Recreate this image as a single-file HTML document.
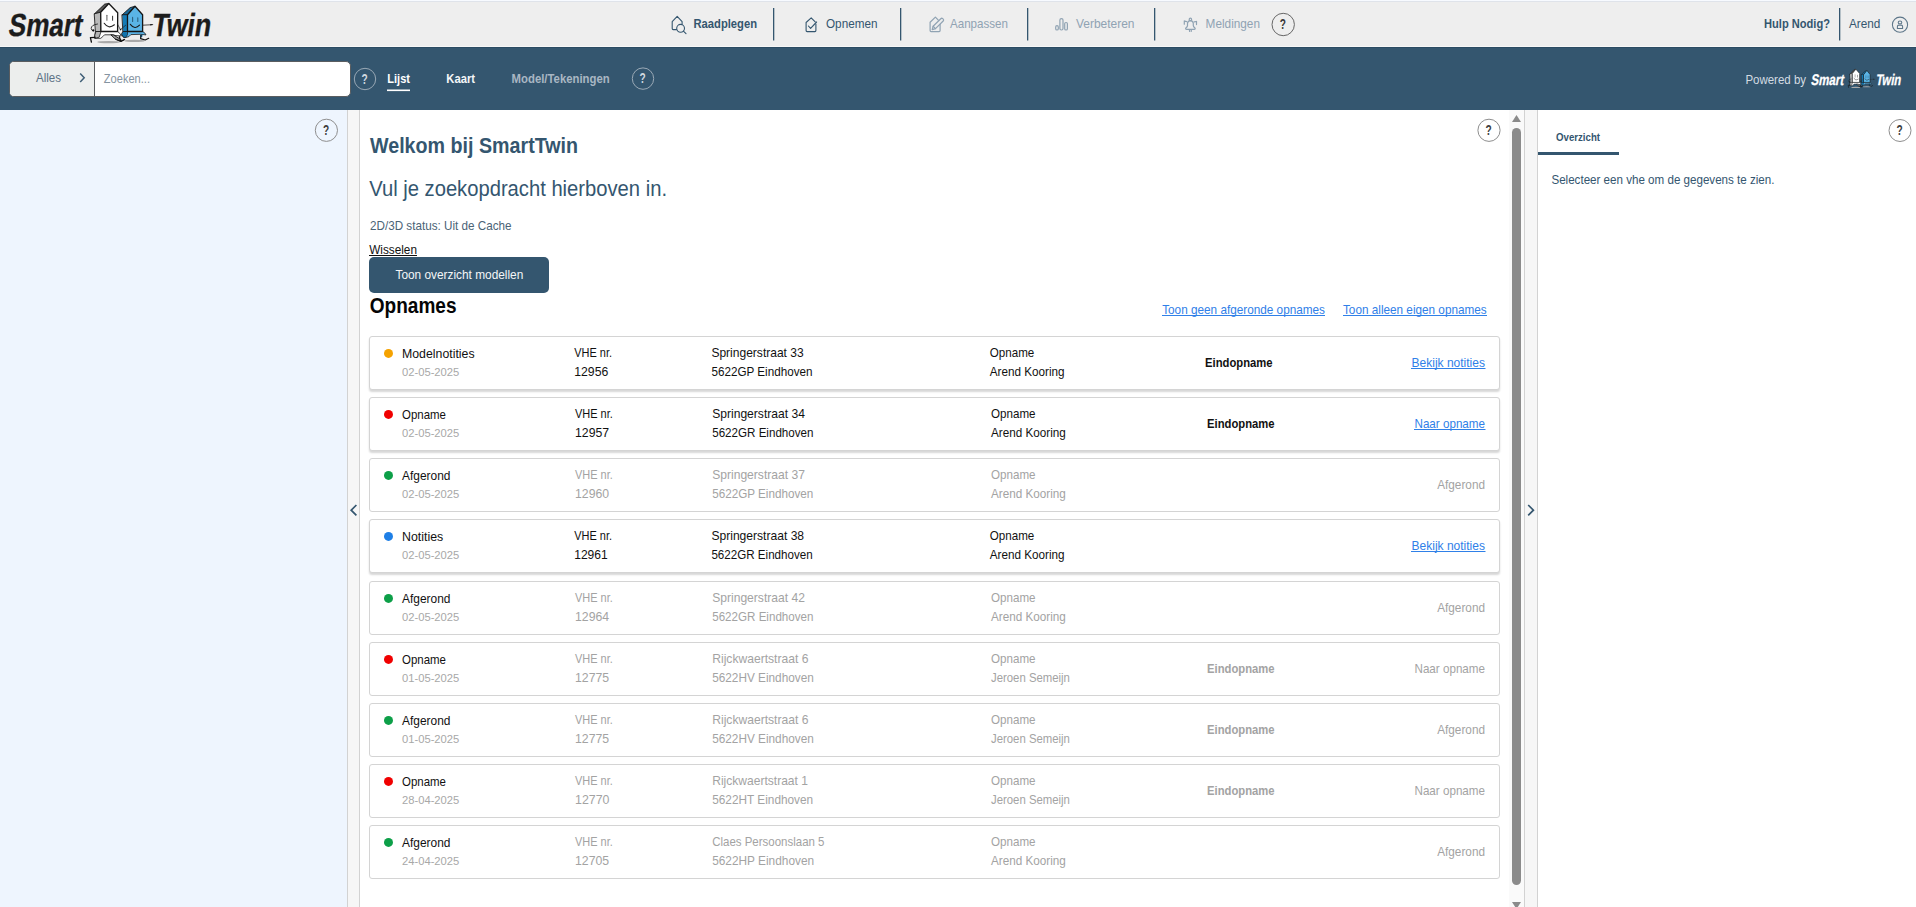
<!DOCTYPE html>
<html><head><meta charset="utf-8"><title>SmartTwin</title>
<style>
*{box-sizing:border-box}
html,body{margin:0;padding:0}
body{width:1916px;height:907px;overflow:hidden;position:relative;background:#fff;font-family:"Liberation Sans",sans-serif}
.abs{position:absolute}
#hdr{left:0;top:0;width:1916px;height:47px;background:#eeeeee;border-top:2px solid #dfe3ea}
#hdrline{left:0;top:46px;width:1916px;height:1px;background:#f7f7f7}
#bar{left:0;top:47px;width:1916px;height:63px;background:#34566f;border-top:1px solid #2b4b63}
#search{left:9px;top:61px;width:342px;height:36px;border:1px solid #5a5d60;border-radius:5px;background:#fff;overflow:hidden}
#alles{left:0;top:0;width:85px;height:34px;background:#eceeed;border-right:1px solid #5a5d60}
#left{left:0;top:110px;width:347px;height:797px;background:#eef5fe}
#div1{left:347px;top:110px;width:13px;height:797px;background:#f6f6f6;border-left:1px solid #d2d2d2;border-right:1px solid #d2d2d2}
#main{left:360px;top:110px;width:1149px;height:797px;background:#fff}
#track{left:1509px;top:110px;width:15px;height:797px;background:#fafafa}
#thumb{left:1512px;top:128px;width:9px;height:757px;background:#8b8b8b;border-radius:4.5px}
#div2{left:1524px;top:110px;width:14px;height:797px;background:#f6f6f6;border-left:1px solid #d2d2d2;border-right:1px solid #d2d2d2}
#right{left:1538px;top:110px;width:378px;height:797px;background:#fff}
#tabline{left:1538px;top:152px;width:81px;height:3px;background:#34566f}
#btn{left:369px;top:257px;width:180px;height:36px;background:#34566f;border-radius:5px}
.card{position:absolute;left:369px;width:1131px;height:54px;border:1px solid #d4d4d4;border-radius:3px;background:#fff}
.card.act{box-shadow:0 2px 2px rgba(0,0,0,0.16)}
svg{position:absolute;left:0;top:0}
text{font-family:"Liberation Sans",sans-serif}
</style></head><body>
<div id="hdr" class="abs"></div><div class="abs" style="left:0;top:0;width:1916px;height:1px;background:#f7faff"></div>
<div id="hdrline" class="abs"></div>
<div id="bar" class="abs"></div>
<div id="search" class="abs"><div id="alles" class="abs"></div></div>
<div id="left" class="abs"></div>
<div id="div1" class="abs"></div>
<div id="main" class="abs"></div>
<div id="track" class="abs"></div>
<div id="thumb" class="abs"></div>
<div id="div2" class="abs"></div>
<div id="right" class="abs"></div>
<div id="tabline" class="abs"></div>
<div id="btn" class="abs"></div>
<div class="card act" style="top:336px"></div><div class="card act" style="top:397px"></div><div class="card" style="top:458px"></div><div class="card act" style="top:519px"></div><div class="card" style="top:581px"></div><div class="card" style="top:642px"></div><div class="card" style="top:703px"></div><div class="card" style="top:764px"></div><div class="card" style="top:825px"></div>
<svg width="1916" height="907" viewBox="0 0 1916 907">

<g id="logo" stroke-linejoin="round" stroke-linecap="round">
  <ellipse cx="108.6" cy="42.1" rx="11.4" ry="1.1" fill="#a9a9a9"/>
  <ellipse cx="134.6" cy="40.9" rx="10" ry="1.1" fill="#a9a9a9"/>
  <!-- white house -->
  <path d="M95.8 31.5 L117.5 31.5 Q120 33 121.5 35.9 L116 35.6 L111.2 34.8 L104.5 34.8 Q103 36.6 100.8 38.3 L94.8 38.3 Z" fill="#ffffff" stroke="#1a1a1a" stroke-width="0.8"/>
  <path d="M96.4 31.5 L101 31.5 L99.2 37.2 L95 38.3 L94.8 35.5 Z" fill="#b5b5b5" stroke="#1a1a1a" stroke-width="0.8"/>
  <path d="M111.2 34.8 L114 35 L116.2 36.6 L121 39.6 L119.8 41 L115.6 39.2 Z" fill="#9a9a9a" stroke="#111" stroke-width="0.9"/>
  <path d="M95 37.4 L90.4 37.6 L91.4 42.2" fill="none" stroke="#111" stroke-width="1.3"/>
  <path d="M115.6 39.2 L121 41.4 L124.4 39.4" fill="none" stroke="#111" stroke-width="1.2"/>
  <path d="M94.6 13.7 L104.7 4.1 L108.8 3.5 L100.7 12.2 Z" fill="#575757" stroke="#1a1a1a" stroke-width="0.9"/>
  <path d="M94.6 13.7 L100.7 12.2 L100.9 31.5 L95.8 31.5 Z" fill="#b9b9b9" stroke="#1a1a1a" stroke-width="0.9"/>
  <path d="M100.7 12.2 L108.8 3.5 L117.7 12.7 L117.6 31.5 L100.9 31.5 Z" fill="#ffffff" stroke="#151515" stroke-width="1.3"/>
  <path d="M97.5 24 Q91 25 91.2 28.5 Q91.5 30.6 93 30.8" fill="none" stroke="#222" stroke-width="0.9"/>
  <circle cx="93.3" cy="30.4" r="1.1" fill="#111"/>
  <path d="M106.9 15.2 V20.3" stroke="#666" stroke-width="1.1"/>
  <path d="M112.6 16.2 V20.3" stroke="#333" stroke-width="1"/>
  <path d="M104.2 23.3 Q108.5 29.5 114.4 24.8" fill="none" stroke="#222" stroke-width="1.1"/>
  <path d="M117.7 24.5 L120.3 29.5" fill="none" stroke="#222" stroke-width="0.7"/>
  <!-- blue house -->
  <path d="M127.5 31.5 L142.6 31.5 Q145 32.5 146 34.9 L140.4 34.3 L130.9 34.6 L128.9 36.6 L125.7 37.5 L123.4 37.2 L121.7 34.3 L123.2 31.5 Z" fill="#5cb6ea" stroke="#1a1a1a" stroke-width="0.8"/>
  <path d="M123.2 31.5 L127.5 31.5 L127.5 34.5 L125.7 37.5 L123.4 37.2 L121.7 34.3 Z" fill="#0f73ad" stroke="#1a1a1a" stroke-width="0.7"/>
  <path d="M140 34.4 L142.6 34.8 L142.2 37 L140.5 37.2 Z" fill="#0f73ad"/>
  <path d="M141 35 L140.6 38.6 L145.2 40 L148.7 38.3" fill="none" stroke="#111" stroke-width="1.2"/>
  <path d="M119.4 36.6 L120.6 41.2 L124.6 39.5" fill="none" stroke="#111" stroke-width="1.2"/>
  <path d="M122.3 14.7 L130.2 7.6 L135 6.3 L127.5 14.7 Z" fill="#17699a" stroke="#1a1a1a" stroke-width="0.9"/>
  <path d="M122.3 14.7 L127.5 14.7 L127.5 31.5 L123.2 31.5 Z" fill="#137bb6" stroke="#1a1a1a" stroke-width="0.9"/>
  <path d="M127.5 14.7 L135 6.3 L142.6 14.7 L142.6 31.5 L127.5 31.5 Z" fill="#5ab4e6" stroke="#151515" stroke-width="1.3"/>
  <path d="M132.6 17.4 V21.4 M137.8 17.8 V21.4" stroke="#2d607f" stroke-width="1.1"/>
  <path d="M130.3 24.3 Q135 30.2 139.5 25.2" fill="none" stroke="#1a1a1a" stroke-width="1.1"/>
  <path d="M125.7 25.2 L120.4 29.6" fill="none" stroke="#222" stroke-width="0.7"/>
  <circle cx="120.6" cy="29.6" r="0.8" fill="#111"/>
  <path d="M142.6 25.2 L152.4 24.7" fill="none" stroke="#222" stroke-width="0.8"/>
  <path d="M150.2 24 L153.6 24.6 L150.4 25.6 Z" fill="#111"/>
</g>
<g transform="translate(1848,69) scale(0.42,0.47) translate(-90,-3)">
  <use href="#logo"/>
</g>
<rect x="773" y="8" width="1.3" height="32.5" fill="#34566f"/><rect x="900" y="8" width="1.3" height="32.5" fill="#34566f"/><rect x="1027" y="8" width="1.3" height="32.5" fill="#34566f"/><rect x="1154" y="8" width="1.3" height="32.5" fill="#34566f"/><rect x="1839" y="8" width="1.3" height="32.5" fill="#34566f"/><circle cx="1283.2" cy="24.5" r="11.2" fill="none" stroke="#666" stroke-width="1"/><g fill="none" stroke="#34566f" stroke-width="1.1" stroke-linejoin="round" stroke-linecap="round"><path d="M676.5 29.6 H673.2 Q672.2 29.6 672.2 28.6 V21.6 L677.2 16.3 L682.1 21.6 V23.8"/><circle cx="680.6" cy="28.3" r="3.9"/><path d="M683.4 31.1 L686 33.6"/></g><g fill="none" stroke="#34566f" stroke-width="1.1" stroke-linejoin="round" stroke-linecap="round"><path d="M815.9 24 V30.6 Q815.9 31.6 814.9 31.6 H807.1 Q806.1 31.6 806.1 30.6 V22.5 L811.2 17.8 L815.2 21.8"/><path d="M808.4 26 L810.6 28.4 L816.6 22"/></g><g fill="none" stroke="#90a3b3" stroke-width="1.2" stroke-linejoin="round" stroke-linecap="round"><path d="M940.1 24.4 V30.6 Q940.1 31.6 939.1 31.6 H931.1 Q930.1 31.6 930.1 30.6 V22.2 L935.4 17.1 L938.3 20.2"/><path d="M932.2 29.6 L933.1 26.3 L940.8 18.7 Q941.8 17.8 942.7 18.7 L943.2 19.2 Q944.1 20.1 943.2 21 L935.5 28.6 Z"/><path d="M933.1 26.3 L935.5 28.6"/></g><g fill="none" stroke="#90a3b3" stroke-width="1.2" stroke-linejoin="round"><rect x="1055.7" y="25.6" width="2.6" height="4.4" rx="1.3"/><rect x="1059.9" y="18.6" width="3.1" height="11.4" rx="1.5"/><rect x="1064.7" y="22.5" width="2.7" height="7.5" rx="1.3"/></g><g fill="none" stroke="#90a3b3" stroke-width="1.2" stroke-linejoin="round" stroke-linecap="round"><circle cx="1190.4" cy="19.4" r="1.2"/><path d="M1190.4 20.6 Q1187.6 20.8 1187.5 23.5 V25.6 Q1187.4 27 1185.8 28 Q1185.2 29.2 1186.6 29.3 H1194.2 Q1195.6 29.2 1195 28 Q1193.4 27 1193.3 25.6 V23.5 Q1193.2 20.8 1190.4 20.6"/><path d="M1189.4 29.5 L1189.6 31.4 M1191.4 29.5 L1191.2 31.4"/><path d="M1184.3 20.8 V24.2 M1186.6 21.6 L1184.8 21.2 M1196.5 21.3 V24.6 M1194.2 21.8 L1196 21.5"/></g><g fill="none" stroke="#5d7689" stroke-width="1.05"><circle cx="1900" cy="24.7" r="7.6"/><ellipse cx="1900" cy="22.4" rx="1.8" ry="1.4"/><path d="M1897.4 28.4 V26.4 Q1897.4 25.1 1898.7 25.1 H1901.3 Q1902.6 25.1 1902.6 26.4 V28.4 Z"/></g><rect x="387" y="89.5" width="23" height="1.6" fill="#ffffff"/><circle cx="365" cy="79" r="10.7" fill="none" stroke="#9aa9b6" stroke-width="1"/><circle cx="643" cy="78.6" r="10.7" fill="none" stroke="#9aa9b6" stroke-width="1"/><path d="M80.2 73.6 L84.2 77.8 L80.2 82" fill="none" stroke="#3f5e76" stroke-width="1.5"/><rect x="369" y="255" width="48" height="1" fill="#111"/><rect x="1162" y="315" width="163" height="1" fill="#2f80e8"/><rect x="1343" y="315" width="144" height="1" fill="#2f80e8"/><circle cx="326.4" cy="130.3" r="11.1" fill="none" stroke="#8e8e8e" stroke-width="1"/><circle cx="1489" cy="130.3" r="11.1" fill="none" stroke="#8e8e8e" stroke-width="1"/><circle cx="1900" cy="130.5" r="11" fill="none" stroke="#8e8e8e" stroke-width="1"/><path d="M356.4 505 L351.2 510.2 L356.4 515.3" fill="none" stroke="#34566f" stroke-width="1.7"/><path d="M1528.2 505 L1533.4 510.2 L1528.2 515.3" fill="none" stroke="#34566f" stroke-width="1.7"/><path d="M1512 122 L1516.5 115 L1521 122 Z" fill="#8b8b8b"/><path d="M1512 902 L1521 902 L1516.5 909 Z" fill="#8b8b8b"/><circle cx="388.5" cy="353.40" r="4.5" fill="#f5a200"/><rect x="1411.0" y="368.00" width="74.5" height="1" fill="#2f80e8"/><circle cx="388.5" cy="414.40" r="4.5" fill="#f00000"/><rect x="1414.0" y="429.00" width="71.5" height="1" fill="#2f80e8"/><circle cx="388.5" cy="475.40" r="4.5" fill="#0d9f48"/><circle cx="388.5" cy="536.40" r="4.5" fill="#1e7fe6"/><rect x="1411.0" y="551.00" width="74.5" height="1" fill="#2f80e8"/><circle cx="388.5" cy="598.40" r="4.5" fill="#0d9f48"/><circle cx="388.5" cy="659.40" r="4.5" fill="#f00000"/><circle cx="388.5" cy="720.40" r="4.5" fill="#0d9f48"/><circle cx="388.5" cy="781.40" r="4.5" fill="#f00000"/><circle cx="388.5" cy="842.40" r="4.5" fill="#0d9f48"/>
<text x="7.60" y="35.70" font-size="32" font-weight="bold" fill="#1c1c1c" text-anchor="start" textLength="73.69" lengthAdjust="spacingAndGlyphs" transform="translate(7.60,35.70) skewX(-9) translate(-7.60,-35.70)" stroke="#1c1c1c" stroke-width="0.35">Smart</text><text x="150.80" y="35.70" font-size="32" font-weight="bold" fill="#1c1c1c" text-anchor="start" textLength="59.02" lengthAdjust="spacingAndGlyphs" transform="translate(150.80,35.70) skewX(-9) translate(-150.80,-35.70)" stroke="#1c1c1c" stroke-width="0.35">Twin</text><text x="693.50" y="27.80" font-size="13" font-weight="bold" fill="#34566f" text-anchor="start" textLength="63.51" lengthAdjust="spacingAndGlyphs">Raadplegen</text><text x="826.00" y="27.80" font-size="13" font-weight="normal" fill="#34566f" text-anchor="start" textLength="51.49" lengthAdjust="spacingAndGlyphs">Opnemen</text><text x="950.00" y="27.80" font-size="13" font-weight="normal" fill="#90a3b3" text-anchor="start" textLength="57.99" lengthAdjust="spacingAndGlyphs">Aanpassen</text><text x="1076.00" y="27.80" font-size="13" font-weight="normal" fill="#90a3b3" text-anchor="start" textLength="58.50" lengthAdjust="spacingAndGlyphs">Verbeteren</text><text x="1205.60" y="27.80" font-size="13" font-weight="normal" fill="#90a3b3" text-anchor="start" textLength="54.39" lengthAdjust="spacingAndGlyphs">Meldingen</text><text x="1764.00" y="27.80" font-size="13" font-weight="bold" fill="#34566f" text-anchor="start" textLength="66.01" lengthAdjust="spacingAndGlyphs">Hulp Nodig?</text><text x="1849.00" y="27.80" font-size="13" font-weight="normal" fill="#34566f" text-anchor="start" textLength="31.41" lengthAdjust="spacingAndGlyphs">Arend</text><text x="1282.80" y="29.10" font-size="14" font-weight="bold" fill="#3a3a3a" text-anchor="middle" textLength="6.20" lengthAdjust="spacingAndGlyphs">?</text><text x="36.00" y="82.20" font-size="13.5" font-weight="normal" fill="#5d7386" text-anchor="start" textLength="25.00" lengthAdjust="spacingAndGlyphs">Alles</text><text x="103.80" y="82.50" font-size="13.5" font-weight="normal" fill="#8594a1" text-anchor="start" textLength="46.19" lengthAdjust="spacingAndGlyphs">Zoeken...</text><text x="387.30" y="83.00" font-size="13.5" font-weight="bold" fill="#ffffff" text-anchor="start" textLength="22.71" lengthAdjust="spacingAndGlyphs">Lijst</text><text x="446.30" y="83.00" font-size="13.5" font-weight="bold" fill="#f4f6f8" text-anchor="start" textLength="28.69" lengthAdjust="spacingAndGlyphs">Kaart</text><text x="511.60" y="83.00" font-size="13.5" font-weight="bold" fill="#a9b7c3" text-anchor="start" textLength="98.09" lengthAdjust="spacingAndGlyphs">Model/Tekeningen</text><text x="364.60" y="83.60" font-size="14" font-weight="bold" fill="#d0d9e0" text-anchor="middle" textLength="6.20" lengthAdjust="spacingAndGlyphs">?</text><text x="642.60" y="83.20" font-size="14" font-weight="bold" fill="#d0d9e0" text-anchor="middle" textLength="6.20" lengthAdjust="spacingAndGlyphs">?</text><text x="1745.40" y="84.20" font-size="13" font-weight="normal" fill="#d3dbe2" text-anchor="start" textLength="60.61" lengthAdjust="spacingAndGlyphs">Powered by</text><text x="1810.50" y="84.60" font-size="15.4" font-weight="bold" fill="#ffffff" text-anchor="start" textLength="32.99" lengthAdjust="spacingAndGlyphs" transform="translate(1810.50,84.60) skewX(-10) translate(-1810.50,-84.60)" stroke="#ffffff" stroke-width="0.3">Smart</text><text x="1875.50" y="84.60" font-size="15.4" font-weight="bold" fill="#ffffff" text-anchor="start" textLength="25.01" lengthAdjust="spacingAndGlyphs" transform="translate(1875.50,84.60) skewX(-10) translate(-1875.50,-84.60)" stroke="#ffffff" stroke-width="0.3">Twin</text><text x="370.00" y="153.00" font-size="21.8" font-weight="bold" fill="#34566f" text-anchor="start" textLength="208.02" lengthAdjust="spacingAndGlyphs">Welkom bij SmartTwin</text><text x="369.20" y="196.00" font-size="22" font-weight="normal" fill="#34566f" text-anchor="start" textLength="297.81" lengthAdjust="spacingAndGlyphs">Vul je zoekopdracht hierboven in.</text><text x="370.00" y="230.00" font-size="13" font-weight="normal" fill="#4b6376" text-anchor="start" textLength="141.60" lengthAdjust="spacingAndGlyphs">2D/3D status: Uit de Cache</text><text x="369.20" y="254.00" font-size="12.5" font-weight="normal" fill="#111111" text-anchor="start" textLength="47.79" lengthAdjust="spacingAndGlyphs">Wisselen</text><text x="395.50" y="279.20" font-size="13.5" font-weight="normal" fill="#f4f6f8" text-anchor="start" textLength="127.79" lengthAdjust="spacingAndGlyphs">Toon overzicht modellen</text><text x="369.80" y="313.00" font-size="22.5" font-weight="bold" fill="#050505" text-anchor="start" textLength="86.70" lengthAdjust="spacingAndGlyphs">Opnames</text><text x="1162.20" y="313.80" font-size="13" font-weight="normal" fill="#2f80e8" text-anchor="start" textLength="162.80" lengthAdjust="spacingAndGlyphs">Toon geen afgeronde opnames</text><text x="1343.00" y="313.80" font-size="13" font-weight="normal" fill="#2f80e8" text-anchor="start" textLength="143.69" lengthAdjust="spacingAndGlyphs">Toon alleen eigen opnames</text><text x="326.00" y="134.90" font-size="14" font-weight="bold" fill="#3d3d3d" text-anchor="middle" textLength="6.20" lengthAdjust="spacingAndGlyphs">?</text><text x="1488.60" y="134.90" font-size="14" font-weight="bold" fill="#3d3d3d" text-anchor="middle" textLength="6.20" lengthAdjust="spacingAndGlyphs">?</text><text x="1899.60" y="135.10" font-size="14" font-weight="bold" fill="#3d3d3d" text-anchor="middle" textLength="6.20" lengthAdjust="spacingAndGlyphs">?</text><text x="1556.00" y="141.00" font-size="11.5" font-weight="bold" fill="#34566f" text-anchor="start" textLength="44.00" lengthAdjust="spacingAndGlyphs">Overzicht</text><text x="1551.40" y="184.20" font-size="13" font-weight="normal" fill="#34566f" text-anchor="start" textLength="223.11" lengthAdjust="spacingAndGlyphs">Selecteer een vhe om de gegevens te zien.</text><text x="402.00" y="357.50" font-size="13" font-weight="normal" fill="#111111" text-anchor="start" textLength="72.60" lengthAdjust="spacingAndGlyphs">Modelnotities</text><text x="402.00" y="376.00" font-size="11" font-weight="normal" fill="#a8a8a8" text-anchor="start" textLength="57.30" lengthAdjust="spacingAndGlyphs">02-05-2025</text><text x="574.20" y="357.20" font-size="13" font-weight="normal" fill="#111111" text-anchor="start" textLength="37.81" lengthAdjust="spacingAndGlyphs">VHE nr.</text><text x="574.20" y="375.80" font-size="13" font-weight="normal" fill="#111111" text-anchor="start" textLength="34.11" lengthAdjust="spacingAndGlyphs">12956</text><text x="711.40" y="357.20" font-size="13" font-weight="normal" fill="#111111" text-anchor="start" textLength="92.31" lengthAdjust="spacingAndGlyphs">Springerstraat 33</text><text x="711.40" y="375.80" font-size="13" font-weight="normal" fill="#111111" text-anchor="start" textLength="101.11" lengthAdjust="spacingAndGlyphs">5622GP Eindhoven</text><text x="989.80" y="357.20" font-size="13" font-weight="normal" fill="#111111" text-anchor="start" textLength="44.51" lengthAdjust="spacingAndGlyphs">Opname</text><text x="989.80" y="375.80" font-size="13" font-weight="normal" fill="#111111" text-anchor="start" textLength="74.81" lengthAdjust="spacingAndGlyphs">Arend Kooring</text><text x="1205.00" y="366.90" font-size="13" font-weight="bold" fill="#111111" text-anchor="start" textLength="67.61" lengthAdjust="spacingAndGlyphs">Eindopname</text><text x="1411.50" y="366.70" font-size="13" font-weight="normal" fill="#2f80e8" text-anchor="start" textLength="73.49" lengthAdjust="spacingAndGlyphs">Bekijk notities</text><text x="402.00" y="418.50" font-size="13" font-weight="normal" fill="#111111" text-anchor="start" textLength="43.91" lengthAdjust="spacingAndGlyphs">Opname</text><text x="402.00" y="437.00" font-size="11" font-weight="normal" fill="#a8a8a8" text-anchor="start" textLength="57.30" lengthAdjust="spacingAndGlyphs">02-05-2025</text><text x="575.00" y="418.20" font-size="13" font-weight="normal" fill="#111111" text-anchor="start" textLength="37.81" lengthAdjust="spacingAndGlyphs">VHE nr.</text><text x="575.00" y="436.80" font-size="13" font-weight="normal" fill="#111111" text-anchor="start" textLength="34.11" lengthAdjust="spacingAndGlyphs">12957</text><text x="712.20" y="418.20" font-size="13" font-weight="normal" fill="#111111" text-anchor="start" textLength="92.71" lengthAdjust="spacingAndGlyphs">Springerstraat 34</text><text x="712.20" y="436.80" font-size="13" font-weight="normal" fill="#111111" text-anchor="start" textLength="101.29" lengthAdjust="spacingAndGlyphs">5622GR Eindhoven</text><text x="991.00" y="418.20" font-size="13" font-weight="normal" fill="#111111" text-anchor="start" textLength="44.51" lengthAdjust="spacingAndGlyphs">Opname</text><text x="991.00" y="436.80" font-size="13" font-weight="normal" fill="#111111" text-anchor="start" textLength="74.81" lengthAdjust="spacingAndGlyphs">Arend Kooring</text><text x="1207.00" y="427.90" font-size="13" font-weight="bold" fill="#111111" text-anchor="start" textLength="67.61" lengthAdjust="spacingAndGlyphs">Eindopname</text><text x="1414.50" y="427.70" font-size="13" font-weight="normal" fill="#2f80e8" text-anchor="start" textLength="70.49" lengthAdjust="spacingAndGlyphs">Naar opname</text><text x="402.00" y="479.50" font-size="13" font-weight="normal" fill="#111111" text-anchor="start" textLength="48.41" lengthAdjust="spacingAndGlyphs">Afgerond</text><text x="402.00" y="498.00" font-size="11" font-weight="normal" fill="#a8a8a8" text-anchor="start" textLength="57.30" lengthAdjust="spacingAndGlyphs">02-05-2025</text><text x="575.00" y="479.20" font-size="13" font-weight="normal" fill="#a3a3a3" text-anchor="start" textLength="37.81" lengthAdjust="spacingAndGlyphs">VHE nr.</text><text x="575.00" y="497.80" font-size="13" font-weight="normal" fill="#a3a3a3" text-anchor="start" textLength="34.11" lengthAdjust="spacingAndGlyphs">12960</text><text x="712.20" y="479.20" font-size="13" font-weight="normal" fill="#a3a3a3" text-anchor="start" textLength="92.71" lengthAdjust="spacingAndGlyphs">Springerstraat 37</text><text x="712.20" y="497.80" font-size="13" font-weight="normal" fill="#a3a3a3" text-anchor="start" textLength="101.11" lengthAdjust="spacingAndGlyphs">5622GP Eindhoven</text><text x="991.00" y="479.20" font-size="13" font-weight="normal" fill="#a3a3a3" text-anchor="start" textLength="44.51" lengthAdjust="spacingAndGlyphs">Opname</text><text x="991.00" y="497.80" font-size="13" font-weight="normal" fill="#a3a3a3" text-anchor="start" textLength="74.81" lengthAdjust="spacingAndGlyphs">Arend Kooring</text><text x="1437.20" y="488.70" font-size="13" font-weight="normal" fill="#a3a3a3" text-anchor="start" textLength="47.81" lengthAdjust="spacingAndGlyphs">Afgerond</text><text x="402.00" y="540.50" font-size="13" font-weight="normal" fill="#111111" text-anchor="start" textLength="41.20" lengthAdjust="spacingAndGlyphs">Notities</text><text x="402.00" y="559.00" font-size="11" font-weight="normal" fill="#a8a8a8" text-anchor="start" textLength="57.30" lengthAdjust="spacingAndGlyphs">02-05-2025</text><text x="574.20" y="540.20" font-size="13" font-weight="normal" fill="#111111" text-anchor="start" textLength="37.81" lengthAdjust="spacingAndGlyphs">VHE nr.</text><text x="574.20" y="558.80" font-size="13" font-weight="normal" fill="#111111" text-anchor="start" textLength="33.51" lengthAdjust="spacingAndGlyphs">12961</text><text x="711.40" y="540.20" font-size="13" font-weight="normal" fill="#111111" text-anchor="start" textLength="92.71" lengthAdjust="spacingAndGlyphs">Springerstraat 38</text><text x="711.40" y="558.80" font-size="13" font-weight="normal" fill="#111111" text-anchor="start" textLength="101.29" lengthAdjust="spacingAndGlyphs">5622GR Eindhoven</text><text x="989.80" y="540.20" font-size="13" font-weight="normal" fill="#111111" text-anchor="start" textLength="44.51" lengthAdjust="spacingAndGlyphs">Opname</text><text x="989.80" y="558.80" font-size="13" font-weight="normal" fill="#111111" text-anchor="start" textLength="74.81" lengthAdjust="spacingAndGlyphs">Arend Kooring</text><text x="1411.50" y="549.70" font-size="13" font-weight="normal" fill="#2f80e8" text-anchor="start" textLength="73.49" lengthAdjust="spacingAndGlyphs">Bekijk notities</text><text x="402.00" y="602.50" font-size="13" font-weight="normal" fill="#111111" text-anchor="start" textLength="48.41" lengthAdjust="spacingAndGlyphs">Afgerond</text><text x="402.00" y="621.00" font-size="11" font-weight="normal" fill="#a8a8a8" text-anchor="start" textLength="57.30" lengthAdjust="spacingAndGlyphs">02-05-2025</text><text x="575.00" y="602.20" font-size="13" font-weight="normal" fill="#a3a3a3" text-anchor="start" textLength="37.81" lengthAdjust="spacingAndGlyphs">VHE nr.</text><text x="575.00" y="620.80" font-size="13" font-weight="normal" fill="#a3a3a3" text-anchor="start" textLength="34.11" lengthAdjust="spacingAndGlyphs">12964</text><text x="712.20" y="602.20" font-size="13" font-weight="normal" fill="#a3a3a3" text-anchor="start" textLength="92.71" lengthAdjust="spacingAndGlyphs">Springerstraat 42</text><text x="712.20" y="620.80" font-size="13" font-weight="normal" fill="#a3a3a3" text-anchor="start" textLength="101.29" lengthAdjust="spacingAndGlyphs">5622GR Eindhoven</text><text x="991.00" y="602.20" font-size="13" font-weight="normal" fill="#a3a3a3" text-anchor="start" textLength="44.51" lengthAdjust="spacingAndGlyphs">Opname</text><text x="991.00" y="620.80" font-size="13" font-weight="normal" fill="#a3a3a3" text-anchor="start" textLength="74.81" lengthAdjust="spacingAndGlyphs">Arend Kooring</text><text x="1437.20" y="611.70" font-size="13" font-weight="normal" fill="#a3a3a3" text-anchor="start" textLength="47.81" lengthAdjust="spacingAndGlyphs">Afgerond</text><text x="402.00" y="663.50" font-size="13" font-weight="normal" fill="#111111" text-anchor="start" textLength="43.91" lengthAdjust="spacingAndGlyphs">Opname</text><text x="402.00" y="682.00" font-size="11" font-weight="normal" fill="#a8a8a8" text-anchor="start" textLength="57.30" lengthAdjust="spacingAndGlyphs">01-05-2025</text><text x="575.00" y="663.20" font-size="13" font-weight="normal" fill="#a3a3a3" text-anchor="start" textLength="37.81" lengthAdjust="spacingAndGlyphs">VHE nr.</text><text x="575.00" y="681.80" font-size="13" font-weight="normal" fill="#a3a3a3" text-anchor="start" textLength="34.11" lengthAdjust="spacingAndGlyphs">12775</text><text x="712.20" y="663.20" font-size="13" font-weight="normal" fill="#a3a3a3" text-anchor="start" textLength="96.29" lengthAdjust="spacingAndGlyphs">Rijckwaertstraat 6</text><text x="712.20" y="681.80" font-size="13" font-weight="normal" fill="#a3a3a3" text-anchor="start" textLength="101.61" lengthAdjust="spacingAndGlyphs">5622HV Eindhoven</text><text x="991.00" y="663.20" font-size="13" font-weight="normal" fill="#a3a3a3" text-anchor="start" textLength="44.51" lengthAdjust="spacingAndGlyphs">Opname</text><text x="991.00" y="681.80" font-size="13" font-weight="normal" fill="#a3a3a3" text-anchor="start" textLength="78.91" lengthAdjust="spacingAndGlyphs">Jeroen Semeijn</text><text x="1207.00" y="672.90" font-size="13" font-weight="bold" fill="#a3a3a3" text-anchor="start" textLength="67.61" lengthAdjust="spacingAndGlyphs">Eindopname</text><text x="1414.50" y="672.70" font-size="13" font-weight="normal" fill="#a3a3a3" text-anchor="start" textLength="70.49" lengthAdjust="spacingAndGlyphs">Naar opname</text><text x="402.00" y="724.50" font-size="13" font-weight="normal" fill="#111111" text-anchor="start" textLength="48.41" lengthAdjust="spacingAndGlyphs">Afgerond</text><text x="402.00" y="743.00" font-size="11" font-weight="normal" fill="#a8a8a8" text-anchor="start" textLength="57.30" lengthAdjust="spacingAndGlyphs">01-05-2025</text><text x="575.00" y="724.20" font-size="13" font-weight="normal" fill="#a3a3a3" text-anchor="start" textLength="37.81" lengthAdjust="spacingAndGlyphs">VHE nr.</text><text x="575.00" y="742.80" font-size="13" font-weight="normal" fill="#a3a3a3" text-anchor="start" textLength="34.11" lengthAdjust="spacingAndGlyphs">12775</text><text x="712.20" y="724.20" font-size="13" font-weight="normal" fill="#a3a3a3" text-anchor="start" textLength="96.29" lengthAdjust="spacingAndGlyphs">Rijckwaertstraat 6</text><text x="712.20" y="742.80" font-size="13" font-weight="normal" fill="#a3a3a3" text-anchor="start" textLength="101.61" lengthAdjust="spacingAndGlyphs">5622HV Eindhoven</text><text x="991.00" y="724.20" font-size="13" font-weight="normal" fill="#a3a3a3" text-anchor="start" textLength="44.51" lengthAdjust="spacingAndGlyphs">Opname</text><text x="991.00" y="742.80" font-size="13" font-weight="normal" fill="#a3a3a3" text-anchor="start" textLength="78.91" lengthAdjust="spacingAndGlyphs">Jeroen Semeijn</text><text x="1207.00" y="733.90" font-size="13" font-weight="bold" fill="#a3a3a3" text-anchor="start" textLength="67.61" lengthAdjust="spacingAndGlyphs">Eindopname</text><text x="1437.20" y="733.70" font-size="13" font-weight="normal" fill="#a3a3a3" text-anchor="start" textLength="47.81" lengthAdjust="spacingAndGlyphs">Afgerond</text><text x="402.00" y="785.50" font-size="13" font-weight="normal" fill="#111111" text-anchor="start" textLength="43.91" lengthAdjust="spacingAndGlyphs">Opname</text><text x="402.00" y="804.00" font-size="11" font-weight="normal" fill="#a8a8a8" text-anchor="start" textLength="57.30" lengthAdjust="spacingAndGlyphs">28-04-2025</text><text x="575.00" y="785.20" font-size="13" font-weight="normal" fill="#a3a3a3" text-anchor="start" textLength="37.81" lengthAdjust="spacingAndGlyphs">VHE nr.</text><text x="575.00" y="803.80" font-size="13" font-weight="normal" fill="#a3a3a3" text-anchor="start" textLength="34.41" lengthAdjust="spacingAndGlyphs">12770</text><text x="712.20" y="785.20" font-size="13" font-weight="normal" fill="#a3a3a3" text-anchor="start" textLength="95.79" lengthAdjust="spacingAndGlyphs">Rijckwaertstraat 1</text><text x="712.20" y="803.80" font-size="13" font-weight="normal" fill="#a3a3a3" text-anchor="start" textLength="100.99" lengthAdjust="spacingAndGlyphs">5622HT Eindhoven</text><text x="991.00" y="785.20" font-size="13" font-weight="normal" fill="#a3a3a3" text-anchor="start" textLength="44.51" lengthAdjust="spacingAndGlyphs">Opname</text><text x="991.00" y="803.80" font-size="13" font-weight="normal" fill="#a3a3a3" text-anchor="start" textLength="78.91" lengthAdjust="spacingAndGlyphs">Jeroen Semeijn</text><text x="1207.00" y="794.90" font-size="13" font-weight="bold" fill="#a3a3a3" text-anchor="start" textLength="67.61" lengthAdjust="spacingAndGlyphs">Eindopname</text><text x="1414.50" y="794.70" font-size="13" font-weight="normal" fill="#a3a3a3" text-anchor="start" textLength="70.49" lengthAdjust="spacingAndGlyphs">Naar opname</text><text x="402.00" y="846.50" font-size="13" font-weight="normal" fill="#111111" text-anchor="start" textLength="48.41" lengthAdjust="spacingAndGlyphs">Afgerond</text><text x="402.00" y="865.00" font-size="11" font-weight="normal" fill="#a8a8a8" text-anchor="start" textLength="57.30" lengthAdjust="spacingAndGlyphs">24-04-2025</text><text x="575.00" y="846.20" font-size="13" font-weight="normal" fill="#a3a3a3" text-anchor="start" textLength="37.81" lengthAdjust="spacingAndGlyphs">VHE nr.</text><text x="575.00" y="864.80" font-size="13" font-weight="normal" fill="#a3a3a3" text-anchor="start" textLength="34.11" lengthAdjust="spacingAndGlyphs">12705</text><text x="712.20" y="846.20" font-size="13" font-weight="normal" fill="#a3a3a3" text-anchor="start" textLength="112.29" lengthAdjust="spacingAndGlyphs">Claes Persoonslaan 5</text><text x="712.20" y="864.80" font-size="13" font-weight="normal" fill="#a3a3a3" text-anchor="start" textLength="101.90" lengthAdjust="spacingAndGlyphs">5622HP Eindhoven</text><text x="991.00" y="846.20" font-size="13" font-weight="normal" fill="#a3a3a3" text-anchor="start" textLength="44.51" lengthAdjust="spacingAndGlyphs">Opname</text><text x="991.00" y="864.80" font-size="13" font-weight="normal" fill="#a3a3a3" text-anchor="start" textLength="74.81" lengthAdjust="spacingAndGlyphs">Arend Kooring</text><text x="1437.20" y="855.70" font-size="13" font-weight="normal" fill="#a3a3a3" text-anchor="start" textLength="47.81" lengthAdjust="spacingAndGlyphs">Afgerond</text>
</svg>
</body></html>
